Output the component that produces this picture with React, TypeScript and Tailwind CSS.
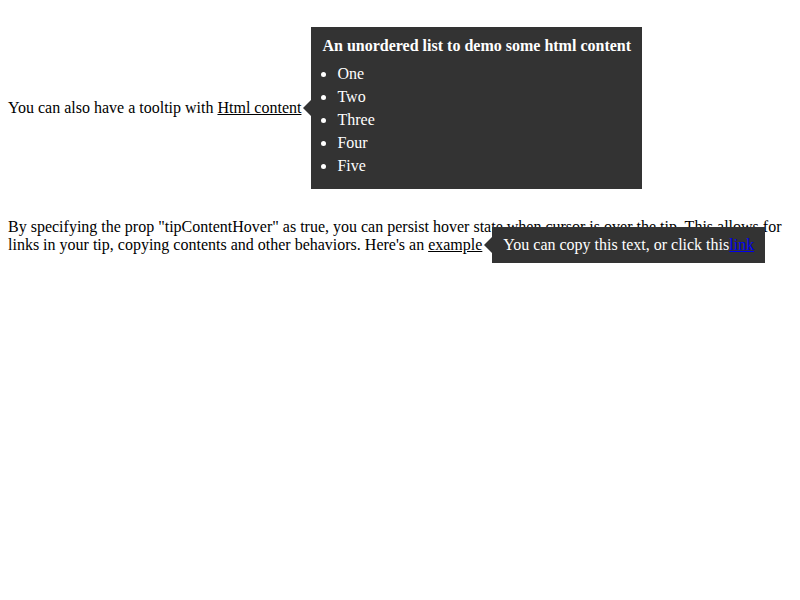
const TIP_BG = "bg-[#333333]";

function Arrow() {
  return (
    <span className="absolute right-full top-1/2 -translate-y-1/2 h-0 w-0 border-y-[8px] border-y-transparent border-r-[8px] border-r-[#333333]" />
  );
}

export default function App() {
  return (
    <div className="p-2 text-[16px] leading-[normal] text-black bg-white min-h-[600px]" style={{ fontFamily: '"Liberation Serif", "Times New Roman", serif' }}>
      {/* Html content tooltip */}
      <p className="mt-[91px]">
        You can also have a tooltip with{" "}
        <span className="relative underline">
          Html content
          <span className={`absolute left-full top-1/2 -translate-y-1/2 ml-[10px] w-max no-underline ${TIP_BG} text-white px-[11px] pt-[10px] pb-[12px] z-10`}>
            <Arrow />
            <span className="block font-bold leading-[18px] whitespace-nowrap">An unordered list to demo some html content</span>
            <ul className="mt-[7px] list-disc pl-[15px]">
              {["One", "Two", "Three", "Four", "Five"].map((item) => (
                <li key={item} className="leading-[23px]">
                  {item}
                </li>
              ))}
            </ul>
          </span>
        </span>
      </p>

      {/* tipContentHover demo */}
      <p className="mt-[101px]">
        By specifying the prop "tipContentHover" as true, you can persist hover state when cursor is over the tip. This allows for
        links in your tip, copying contents and other behaviors. Here's an{" "}
        <span className="relative underline">
          example
          <span className={`absolute left-full top-1/2 -translate-y-1/2 ml-[10px] w-max whitespace-nowrap ${TIP_BG} text-white px-[11px] py-[9px] leading-[18px] z-10 inline-block`}>
            <Arrow />
            <span className="no-underline inline-block">You can copy this text, or click this</span>
            <a href="#" className="text-[#0000ee] underline">
              link
            </a>
          </span>
        </span>
      </p>
    </div>
  );
}
